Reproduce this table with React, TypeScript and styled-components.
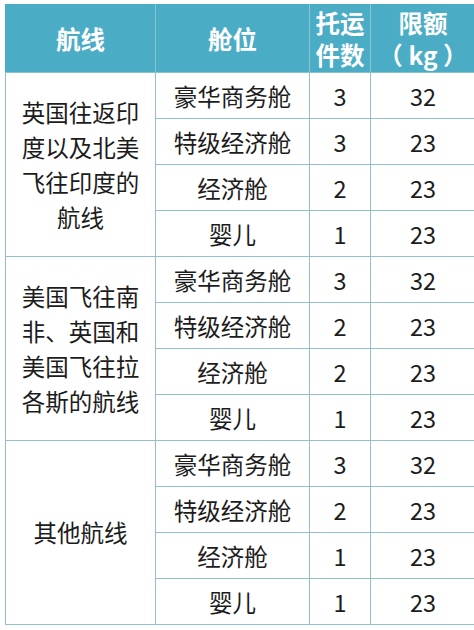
import * as React from 'react';
import styled, { createGlobalStyle } from 'styled-components';

const GlobalStyle = createGlobalStyle`
	html, body {
		margin: 0;
		padding: 0;
		background: #ffffff;
	}
	body {
		font-family: "Noto Sans CJK SC", "Noto Sans", sans-serif;
	}
`;

const Page = styled.div`
	width: 474px;
	height: 630px;
	padding: 4px 0 0 5px;
	box-sizing: border-box;
`;

const Table = styled.table`
	border-collapse: collapse;
	table-layout: fixed;
	width: 466px;
	color: #1c1c1c;
`;

const HeadCell = styled.th<{ $w: number }>`
	width: ${p => p.$w}px;
	height: 67px;
	padding: 0;
	background: #4bacc6;
	color: #ffffff;
	font-size: 24.5px;
	font-weight: 700;
	line-height: 32px;
	text-align: center;
	white-space: pre;
	border: 1px solid #8ac2d0;
	border-top-color: #4bacc6;
	border-left-color: #4bacc6;
	&:last-child {
		border-right-color: #4bacc6;
	}
`;

const RouteCell = styled.td`
	padding: 0 10px;
	font-size: 23.5px;
	line-height: 35px;
	text-align: center;
	border: 1px solid #93c0ca;
`;

const Cell = styled.td`
	height: 45px;
	padding: 0;
	font-size: 23.5px;
	line-height: 30px;
	text-align: center;
	border: 1px solid #93c0ca;
`;

type Row = [string, number, number];

const groups: { route: string; rows: Row[] }[] = [
	{
		route: '英国往返印度以及北美飞往印度的航线',
		rows: [
			['豪华商务舱', 3, 32],
			['特级经济舱', 3, 23],
			['经济舱', 2, 23],
			['婴儿', 1, 23],
		],
	},
	{
		route: '美国飞往南非、英国和美国飞往拉各斯的航线',
		rows: [
			['豪华商务舱', 3, 32],
			['特级经济舱', 2, 23],
			['经济舱', 2, 23],
			['婴儿', 1, 23],
		],
	},
	{
		route: '其他航线',
		rows: [
			['豪华商务舱', 3, 32],
			['特级经济舱', 2, 23],
			['经济舱', 1, 23],
			['婴儿', 1, 23],
		],
	},
];

const App = () => (
	<Page>
		<GlobalStyle />
		<Table>
			<thead>
				<tr>
					<HeadCell $w={149}>航线</HeadCell>
					<HeadCell $w={153}>舱位</HeadCell>
					<HeadCell $w={60}>托运<br />件数</HeadCell>
					<HeadCell $w={104}>限额<br />{'（ kg ）'}</HeadCell>
				</tr>
			</thead>
			<tbody>
				{groups.map(g =>
					g.rows.map(([cabin, pieces, limit], i) => (
						<tr key={g.route + cabin}>
							{i === 0 && <RouteCell rowSpan={g.rows.length}>{g.route}</RouteCell>}
							<Cell>{cabin}</Cell>
							<Cell>{pieces}</Cell>
							<Cell>{limit}</Cell>
						</tr>
					))
				)}
			</tbody>
		</Table>
	</Page>
);

export default App;
